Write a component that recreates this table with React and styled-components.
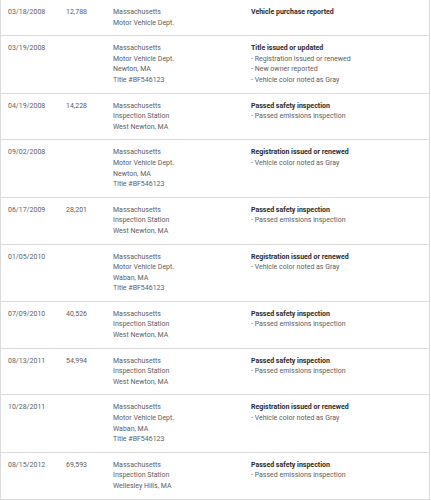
import React from "react";
import styled, { createGlobalStyle } from "styled-components";

const Global = createGlobalStyle`
  html, body { margin: 0; padding: 0; background: #fff; }
  body { font-family: Roboto, "Liberation Sans", sans-serif; }
`;

const Table = styled.div`
  width: 430px;
  box-sizing: border-box;
  border-left: 1px solid #dcdcdc;
  border-right: 1px solid #dcdcdc;
`;

const Row = styled.div`
  display: grid;
  grid-template-columns: 58px 47px 138px 1fr;
  border-bottom: 1px solid #dcdcdc;
  padding: 7px 0;
`;

const Cell = styled.div`
  padding-left: 7px;
  font-size: 7px;
  line-height: 10.6px;
  color: #606060;
`;

const Line = styled.div`
  white-space: nowrap;
  font-weight: ${(p) => (p.$bold ? 700 : 400)};
  color: ${(p) => (p.$bold ? "#2a2a2a" : "#606060")};
`;

const rows = [
  ["03/18/2008", "12,788", ["Massachusetts", "Motor Vehicle Dept."], ["Vehicle purchase reported"]],
  ["03/19/2008", "", ["Massachusetts", "Motor Vehicle Dept.", "Newton, MA", "Title #BF546123"], ["Title issued or updated", "- Registration issued or renewed", "- New owner reported", "- Vehicle color noted as Gray"]],
  ["04/19/2008", "14,228", ["Massachusetts", "Inspection Station", "West Newton, MA"], ["Passed safety inspection", "- Passed emissions inspection"]],
  ["09/02/2008", "", ["Massachusetts", "Motor Vehicle Dept.", "Newton, MA", "Title #BF546123"], ["Registration issued or renewed", "- Vehicle color noted as Gray"]],
  ["06/17/2009", "28,201", ["Massachusetts", "Inspection Station", "West Newton, MA"], ["Passed safety inspection", "- Passed emissions inspection"]],
  ["01/05/2010", "", ["Massachusetts", "Motor Vehicle Dept.", "Waban, MA", "Title #BF546123"], ["Registration issued or renewed", "- Vehicle color noted as Gray"]],
  ["07/09/2010", "40,526", ["Massachusetts", "Inspection Station", "West Newton, MA"], ["Passed safety inspection", "- Passed emissions inspection"]],
  ["08/13/2011", "54,994", ["Massachusetts", "Inspection Station", "West Newton, MA"], ["Passed safety inspection", "- Passed emissions inspection"]],
  ["10/28/2011", "", ["Massachusetts", "Motor Vehicle Dept.", "Waban, MA", "Title #BF546123"], ["Registration issued or renewed", "- Vehicle color noted as Gray"]],
  ["08/15/2012", "69,593", ["Massachusetts", "Inspection Station", "Wellesley Hills, MA"], ["Passed safety inspection", "- Passed emissions inspection"]],
];

export default function App() {
  return (
    <>
      <Global />
      <Table>
        {rows.map(([date, miles, source, details], i) => (
          <Row key={i}>
            <Cell>{date}</Cell>
            <Cell>{miles}</Cell>
            <Cell>
              {source.map((s, j) => (
                <Line key={j}>{s}</Line>
              ))}
            </Cell>
            <Cell>
              {details.map((d, j) => (
                <Line key={j} $bold={j === 0}>{d}</Line>
              ))}
            </Cell>
          </Row>
        ))}
      </Table>
    </>
  );
}
